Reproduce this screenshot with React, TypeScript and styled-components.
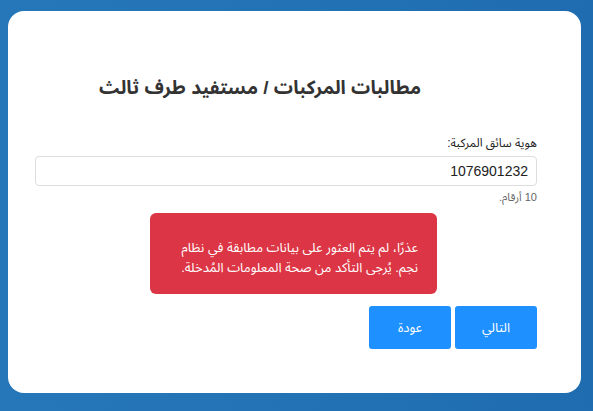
import React from "react";
import styled, { createGlobalStyle } from "styled-components";

const FONT = `"Liberation Sans", "Noto Sans Arabic", Arial, sans-serif`;

const Global = createGlobalStyle`
  html, body { margin: 0; padding: 0; }
  body {
    background: linear-gradient(90deg, #2677b9 0%, #1f6db0 100%);
    font-family: ${FONT};
    min-height: 411px;
  }
`;

const Page = styled.div`
  padding: 11px 12px 18px 8px;
`;

const Card = styled.div`
  background: #fff;
  border-radius: 16px;
  height: 382px;
  box-sizing: border-box;
  padding: 0 44px 0 27px;
  direction: rtl;
  display: flex;
  flex-direction: column;
`;

const Title = styled.h1`
  margin: 62px 0 0;
  padding-right: 52px;
  text-align: center;
  font-size: 19px;
  font-weight: bold;
  color: #333;
  line-height: 30px;
`;

const Label = styled.label`
  display: block;
  margin-top: 32px;
  font-size: 12px;
  color: #222;
  line-height: 16px;
`;

const Input = styled.input`
  margin-top: 5px;
  height: 30px;
  box-sizing: border-box;
  border: 1px solid #ddd;
  border-radius: 4px;
  padding: 0 8px;
  font-size: 14px;
  font-family: ${FONT};
  color: #222;
  text-align: right;
  direction: rtl;
  outline: none;
`;

const Hint = styled.div`
  margin-top: 5px;
  font-size: 11px;
  color: #666;
  line-height: 13px;
`;

const Alert = styled.div`
  align-self: center;
  margin: 9px 0 0 15px;
  width: 287px;
  height: 81px;
  box-sizing: border-box;
  background: #dc3545;
  color: #fff;
  border-radius: 6px;
  padding: 25px 19px 0 19px;
  font-size: 13px;
  line-height: 20px;
`;

const Actions = styled.div`
  display: flex;
  gap: 4px;
  margin-top: 12px;
`;

const Button = styled.button`
  width: 82px;
  height: 43px;
  border: none;
  border-radius: 3px;
  background: #1e90ff;
  color: #fff;
  font-size: 13px;
  font-family: ${FONT};
  cursor: pointer;
`;

export default function App() {
  return (
    <>
      <Global />
      <Page>
        <Card>
          <Title>مطالبات المركبات / مستفيد طرف ثالث</Title>
          <Label>هوية سائق المركبة:</Label>
          <Input defaultValue="1076901232" />
          <Hint>10 أرقام.</Hint>
          <Alert>
            عذرًا، لم يتم العثور على بيانات مطابقة في نظام نجم. يُرجى التأكد من صحة المعلومات المُدخلة.
          </Alert>
          <Actions>
            <Button>التالي</Button>
            <Button>عودة</Button>
          </Actions>
        </Card>
      </Page>
    </>
  );
}
